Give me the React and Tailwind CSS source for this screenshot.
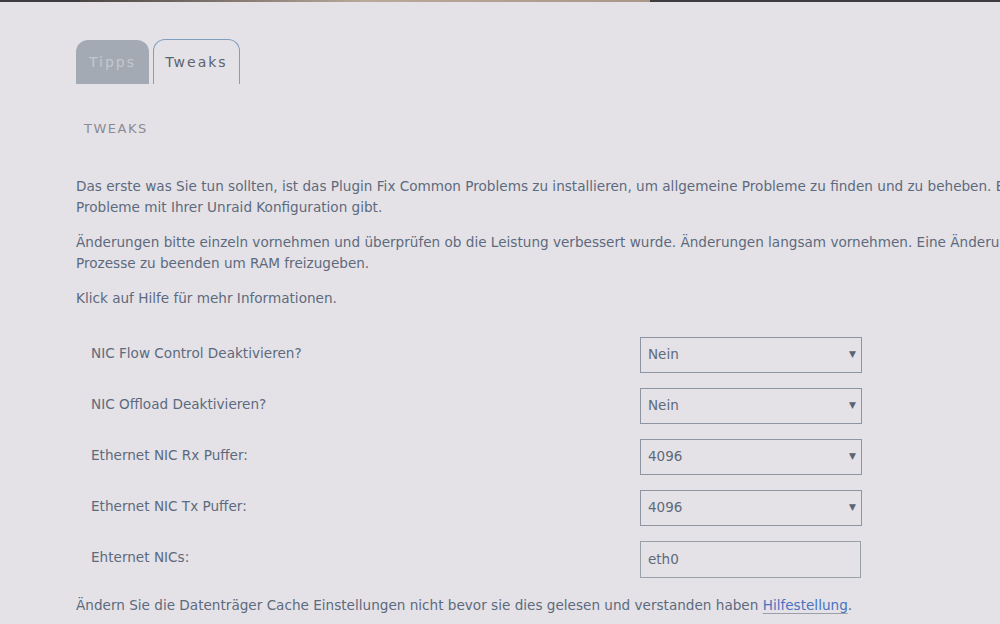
import React from 'react';

const font = { fontFamily: '"DejaVu Sans", "Liberation Sans", sans-serif' };

const rows = [
  { label: 'NIC Flow Control Deaktivieren?', value: 'Nein', type: 'select' },
  { label: 'NIC Offload Deaktivieren?', value: 'Nein', type: 'select' },
  { label: 'Ethernet NIC Rx Puffer:', value: '4096', type: 'select' },
  { label: 'Ethernet NIC Tx Puffer:', value: '4096', type: 'select' },
  { label: 'Ehternet NICs:', value: 'eth0', type: 'input' },
];

const Field = ({ row }) => {
  if (row.type === 'input') {
    return (
      <div className="w-[221px] h-[37px] border border-[#9aa0a8] flex items-center pl-[7px] text-[13.5px] text-[#5e6a7c]">
        {row.value}
      </div>
    );
  }
  return (
    <div className="w-[222px] h-[36px] border border-[#8c95a1] flex items-center justify-between pl-[7px] pr-[5px] text-[13.5px] text-[#5e6a7c]">
      <span>{row.value}</span>
      <span className="text-[9px] text-[#5a6472]">▼</span>
    </div>
  );
};

const App = () => {
  return (
    <div className="w-[1000px] h-[624px] overflow-hidden bg-[#e4e2e6] text-[#5d6a7e]" style={font}>
      {/* top strip */}
      <div className="flex h-[2px]">
        <div className="w-[80px] bg-[#3d3d3f]" />
        <div className="w-[570px] bg-gradient-to-r from-[#4a4644] via-[#b9a99b] to-[#a99888]" />
        <div className="flex-1 bg-[#3d3d3f]" />
      </div>

      <div className="pl-[76px] pt-[37px]">
        {/* tabs */}
        <div className="flex items-end gap-[4px]">
          <div className="w-[73px] h-[44px] rounded-t-[12px] bg-[#a3aab3] text-[#c3c8cf] text-[14px] tracking-[2px] flex items-center justify-center">
            Tipps
          </div>
          <div className="w-[87px] h-[45px] rounded-t-[12px] border border-b-0 border-[#7e9fbf] text-[#5b6370] text-[14px] tracking-[2px] flex items-center justify-center">
            Tweaks
          </div>
        </div>

        <div className="mt-[35px] pl-[8px] text-[13px] tracking-[1.5px] text-[#8b8b95]">TWEAKS</div>

        <div className="mt-[37px] text-[13.6px] leading-[21px] whitespace-nowrap">
          <p>
            Das erste was Sie tun sollten, ist das Plugin Fix Common Problems zu installieren, um allgemeine Probleme zu finden und zu beheben. Es zeigt an, ob es
            <br />
            Probleme mit Ihrer Unraid Konfiguration gibt.
          </p>
          <p className="mt-[14px]">
            Änderungen bitte einzeln vornehmen und überprüfen ob die Leistung verbessert wurde. Änderungen langsam vornehmen. Eine Änderung kann helfen
            <br />
            Prozesse zu beenden um RAM freizugeben.
          </p>
          <p className="mt-[14px]">Klick auf Hilfe für mehr Informationen.</p>
        </div>

        <div className="mt-[28px] flex flex-col gap-[15px]">
          {rows.map((row) => (
            <div key={row.label} className="flex items-center">
              <div className="w-[564px] pl-[15px] text-[13.6px] pb-[3px]">{row.label}</div>
              <Field row={row} />
            </div>
          ))}
        </div>

        <p className="mt-[17px] text-[13.6px] whitespace-nowrap">
          Ändern Sie die Datenträger Cache Einstellungen nicht bevor sie dies gelesen und verstanden haben{' '}
          <a className="text-[#4a72c0] underline decoration-[#9aa0a8] underline-offset-[3px]">Hilfestellung</a>.
        </p>
      </div>
    </div>
  );
};

export default App;
